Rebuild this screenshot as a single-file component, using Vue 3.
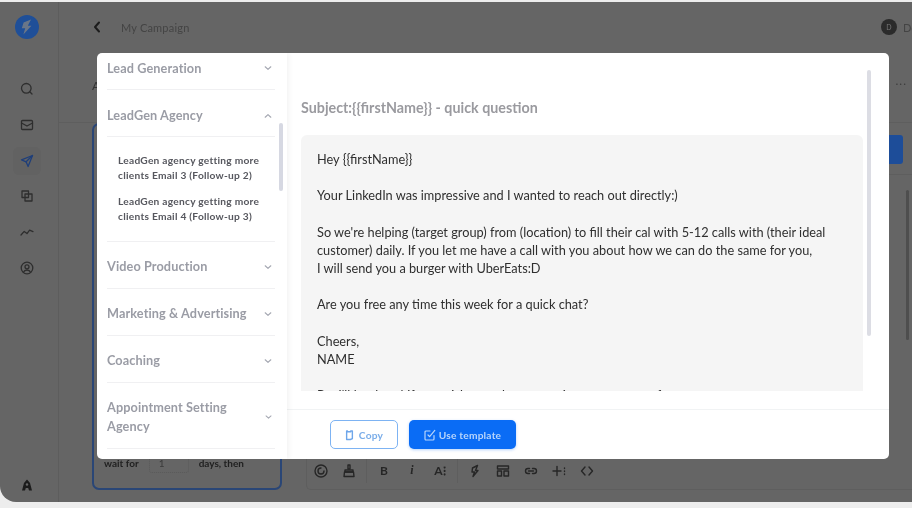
<template>
  <div class="screen">
    <div class="frame">
      <aside class="sidebar">
        <div class="logo">
          <svg width="24" height="24" viewBox="0 0 24 24"><circle cx="12" cy="12" r="12" fill="#1f4f98" /><path d="M16 4.5 8.6 7.6 6.8 13.2h3.4l-1.8 6.3 8-8.7h-3.6z" fill="#6a7688" /></svg>
        </div>
        <nav class="side-nav">
          <span v-for="icon in sideIcons" :key="icon.name" :class="['side-item', { active: icon.active }]">
            <svg width="14" height="14" viewBox="0 0 14 14" fill="none" :stroke="icon.active ? '#1f3f7a' : '#2e2e2e'" stroke-width="1.3" stroke-linecap="round" stroke-linejoin="round">
              <path v-for="d in icon.paths" :key="d" :d="d" />
            </svg>
          </span>
        </nav>
        <span class="side-bottom">
          <svg width="12" height="12" viewBox="0 0 12 12"><path d="M6 .5 9 4l2 7.5H8L7.2 9H4.8L4 11.5H1L3 4z" fill="#1c1c1c" /><circle cx="6" cy="5.5" r="1.2" fill="#666" /></svg>
        </span>
      </aside>

      <main class="main">
        <header class="topbar">
          <svg class="back" width="10" height="12" viewBox="0 0 10 12" fill="none" stroke="#1c1c1c" stroke-width="2" stroke-linecap="round" stroke-linejoin="round"><path d="M7 1.5 3 6l4 4.5" /></svg>
          <span class="camp-name">My Campaign</span>
          <span class="avatar">D</span>
          <span class="user-name">Do</span>
        </header>
        <div class="sub-row">
          <span class="sub-title">A</span>
          <span class="dots">...</span>
        </div>
        <div class="content">
          <section class="step-card">
            <div class="wait-row">
              <span>wait for</span>
              <span class="wait-input">1</span>
              <span>days, then</span>
            </div>
          </section>
          <section class="editor">
            <div class="editor-top"><span class="send-btn"></span></div>
            <div class="editor-body"><span class="bg-scroll"></span></div>
            <div class="toolbar">
              <template v-for="tool in tools" :key="tool.name">
                <span v-if="tool.sep" class="tool-sep"></span>
                <span v-else-if="tool.text" :class="['tool', tool.name]">{{ tool.text }}</span>
                <svg v-else class="tool" width="14" height="14" viewBox="0 0 14 14" fill="none" stroke="#262626" stroke-width="1.4" stroke-linecap="round" stroke-linejoin="round">
                  <path v-for="d in tool.paths" :key="d" :d="d" />
                </svg>
              </template>
            </div>
          </section>
        </div>
      </main>
    </div>

    <div class="modal">
      <div class="categories">
        <div v-for="cat in categories" :key="cat.name" :class="['cat', cat.kind]">
          <div class="cat-head">
            <span class="cat-name">{{ cat.name }}</span>
            <svg width="8" height="6" viewBox="0 0 8 6" fill="none" stroke="#a5a8b2" stroke-width="1.2" stroke-linecap="round" stroke-linejoin="round">
              <path :d="cat.items ? 'M1.2 4.2 4 1.6l2.8 2.6' : 'M1.2 1.8 4 4.4l2.8-2.6'" />
            </svg>
          </div>
          <div v-if="cat.items" class="cat-items">
            <p v-for="item in cat.items" :key="item">{{ item }}</p>
          </div>
        </div>
        <span class="list-scroll"></span>
      </div>
      <div class="detail">
        <div class="preview">
          <h2 class="subject">Subject:&#123;&#123;firstName&#125;&#125; - quick question</h2>
          <div class="mail">
            <p v-for="para in paragraphs" :key="para">{{ para }}</p>
          </div>
          <span class="preview-scroll"></span>
        </div>
        <footer class="modal-foot">
          <button class="btn btn-outline">
            <svg width="9" height="12" viewBox="0 0 11 13" fill="none" stroke="#6ea6ea" stroke-width="1.7" stroke-linejoin="round"><path d="M2 1.5h1v1h4v-1h2v9.5L6.5 12H2z" /></svg>
            Copy
          </button>
          <button class="btn btn-solid">
            <svg width="12" height="12" viewBox="0 0 12 12" fill="none" stroke="#b8d5fb" stroke-width="1.2" stroke-linecap="round" stroke-linejoin="round"><path d="M10 6.5V10a1 1 0 0 1-1 1H2a1 1 0 0 1-1-1V3a1 1 0 0 1 1-1h4" /><path d="m4 6 1.6 1.6L10.8 1.4" /></svg>
            Use template
          </button>
        </footer>
      </div>
    </div>
  </div>
</template>

<script setup>
const sideIcons = [
  { name: 'search', paths: ['M6.3 1.5a4.8 4.8 0 1 0 0 9.6 4.8 4.8 0 0 0 0-9.6z', 'M10 10l2 2'] },
  { name: 'mail', paths: ['M2.5 2.5h9a1 1 0 0 1 1 1v7a1 1 0 0 1-1 1h-9a1 1 0 0 1-1-1v-7a1 1 0 0 1 1-1z', 'M1.5 5 7 8l5.5-3'] },
  { name: 'send', active: true, paths: ['M12.5 1.5 1.5 5.8l4.6 2 2 4.7z', 'M6.1 7.8 12.5 1.5'] },
  { name: 'copy', paths: ['M2 2h6.5v6.5H2z', 'M5 5h7v7H5z'] },
  { name: 'stats', paths: ['M1 10l3.2-3.6L7 8.6l2.6-3.4L13 6.6'] },
  { name: 'user', paths: ['M7 1.2a5.8 5.8 0 1 0 0 11.6A5.8 5.8 0 0 0 7 1.2z', 'M7 3.8a2 2 0 1 0 0 4 2 2 0 0 0 0-4z', 'M3.5 11.2C4.2 9.6 5.4 9 7 9s2.8.6 3.5 2.2'] }
]

const tools = [
  { name: 'emoji', paths: ['M7 1a6 6 0 1 0 0 12A6 6 0 0 0 7 1z', 'M7 4a3 3 0 1 0 3 3'] },
  { name: 'brush', paths: ['M6 1h2v4H6z', 'M3 6h8v2H3z', 'M2.5 8h9l.5 4.5H2z'] },
  { name: 'sep1', sep: true },
  { name: 'bold', text: 'B' },
  { name: 'italic', text: 'i' },
  { name: 'size', text: 'A⁝' },
  { name: 'sep2', sep: true },
  { name: 'bolt', paths: ['M9.5 1.5 4.5 4 4 8h2.5L5 12.5 10 6.5H7.5z'] },
  { name: 'layout', paths: ['M1.5 2h11v3h-11z', 'M1.5 7h4v5h-4z', 'M8 7h4.5v5H8z'] },
  { name: 'link', paths: ['M5.5 4.5H4a2.5 2.5 0 0 0 0 5h1.5', 'M8.5 4.5H10a2.5 2.5 0 0 1 0 5H8.5', 'M4.5 7h5'] },
  { name: 'plus', paths: ['M5 2.5v9', 'M1 7h8', 'M12.5 4v.5', 'M12.5 7v.5', 'M12.5 10v.5'] },
  { name: 'code', paths: ['M5 3 1.5 7 5 11', 'M9 3l3.5 4L9 11'] }
]

const categories = [
  { name: 'Lead Generation', kind: 'cut' },
  {
    name: 'LeadGen Agency',
    kind: 'open',
    items: [
      'LeadGen agency getting more clients Email 3 (Follow-up 2)',
      'LeadGen agency getting more clients Email 4 (Follow-up 3)'
    ]
  },
  { name: 'Video Production' },
  { name: 'Marketing & Advertising' },
  { name: 'Coaching' },
  { name: 'Appointment Setting Agency', kind: 'tall' }
]

const paragraphs = [
  'Hey {{firstName}}',
  'Your LinkedIn was impressive and I wanted to reach out directly:)',
  "So we're helping (target group) from (location) to fill their cal with 5-12 calls with (their ideal customer) daily. If you let me have a call with you about how we can do the same for you,\nI will send you a burger with UberEats:D",
  'Are you free any time this week for a quick chat?',
  'Cheers,\nNAME',
  "P.s. I'll be there! If you wish to make an appointment, you are free"
]
</script>

<style>
html, body { margin: 0; background: #ededed; }
</style>

<style scoped>
.screen {
  position: relative;
  width: 912px;
  height: 508px;
  overflow: hidden;
  padding-top: 2px;
  box-sizing: border-box;
  background: #ededed;
  font-family: Lato, "Open Sans", sans-serif;
  filter: blur(0.35px);
}
.frame {
  display: flex;
  height: 500px;
  background: #656565;
  border-bottom-left-radius: 16px;
  overflow: hidden;
  color: #222;
}

.sidebar {
  width: 59px;
  flex-shrink: 0;
  box-sizing: border-box;
  border-right: 1px solid #5d5d5d;
  display: flex;
  flex-direction: column;
  align-items: center;
  padding-top: 13px;
}
.logo { height: 24px; margin-right: 4px; }
.side-nav {
  margin-top: 36px;
  margin-right: 4px;
  display: flex;
  flex-direction: column;
  align-items: center;
  gap: 7.8px;
}
.side-item {
  width: 28px;
  height: 28px;
  display: flex;
  align-items: center;
  justify-content: center;
  border-radius: 6px;
}
.side-item.active { background: #626262; }
.side-bottom { margin-top: auto; margin-right: 4px; margin-bottom: 15px; height: 12px; }

.main { flex: 1; min-width: 0; display: flex; flex-direction: column; }
.topbar {
  height: 50px;
  flex-shrink: 0;
  display: flex;
  align-items: center;
  padding-left: 33px;
}
.back { margin-right: 19px; }
.camp-name { font-size: 11px; color: #444; letter-spacing: 0.2px; }
.avatar {
  margin-left: auto;
  width: 16px;
  height: 16px;
  flex-shrink: 0;
  border-radius: 50%;
  background: #2b2b2b;
  color: #777;
  font-size: 7px;
  display: flex;
  align-items: center;
  justify-content: center;
}
.user-name { font-size: 11px; color: #444; margin-left: 6px; width: 9px; white-space: nowrap; flex-shrink: 0; }
.sub-row {
  height: 71px;
  flex-shrink: 0;
  display: flex;
  justify-content: space-between;
  padding: 26px 5px 0 33px;
  box-sizing: border-box;
  font-size: 12px;
  color: #333;
  border-bottom: 1px solid #5e5e5e;
}
.dots { color: #3c3c3c; letter-spacing: 1px; line-height: 6px; }
.content { flex: 1; min-height: 0; display: flex; gap: 24px; padding: 0 0 12px 33px; }
.step-card {
  width: 190px;
  flex-shrink: 0;
  box-sizing: border-box;
  border: 2px solid #2a4676;
  border-radius: 7px;
  display: flex;
  align-items: flex-end;
  padding: 0 10px 15px;
}
.wait-row { display: flex; align-items: center; gap: 10px; font-size: 10px; font-weight: 700; color: #1f1f1f; }
.wait-input {
  width: 40px;
  height: 20px;
  box-sizing: border-box;
  border: 1px dotted #5a5a5a;
  border-radius: 3px;
  display: flex;
  align-items: center;
  padding-left: 9px;
  font-weight: 400;
  color: #3a3a3a;
}
.editor { flex: 1; min-width: 0; display: flex; flex-direction: column; }
.editor-top {
  height: 52px;
  flex-shrink: 0;
  box-sizing: border-box;
  display: flex;
  justify-content: flex-end;
  padding: 12px 9px 11px 0;
  border-bottom: 1px solid #5e5e5e;
}
.send-btn { width: 14px; height: 29px; background: #1d4d99; border-radius: 0 3px 3px 0; }
.editor-body { flex: 1; min-height: 0; display: flex; justify-content: flex-end; padding: 15px 3px 0 0; }
.bg-scroll { width: 3px; height: 150px; background: #4e4e4e; border-radius: 2px; }
.toolbar {
  height: 38px;
  flex-shrink: 0;
  box-sizing: border-box;
  border: 1px solid #5e5e5e;
  border-width: 0 0 1px 1px;
  border-bottom-left-radius: 5px;
  display: flex;
  align-items: center;
  gap: 14px;
  padding-left: 7px;
  font-size: 12px;
  font-weight: 700;
  color: #262626;
}
.tool { width: 14px; text-align: center; flex-shrink: 0; white-space: nowrap; }
.tool.italic { font-style: italic; font-family: "Liberation Serif", serif; }
.tool-sep { width: 1px; height: 24px; background: #5e5e5e; margin: 0 -4px; }

.modal {
  position: absolute;
  left: 97px;
  top: 53px;
  width: 792px;
  height: 406px;
  background: #fff;
  border-radius: 5px;
  overflow: hidden;
  display: flex;
}
.categories {
  position: relative;
  width: 190px;
  flex-shrink: 0;
  box-sizing: border-box;
  padding: 0 12px 0 10px;
  overflow: hidden;
  box-shadow: 2px 0 5px rgba(0, 0, 0, 0.05);
}
.cat { border-bottom: 1px solid #f0f0f2; }
.cat-head {
  display: flex;
  align-items: center;
  justify-content: space-between;
  gap: 12px;
  min-height: 46px;
  padding: 3px 3px 0 0;
  box-sizing: border-box;
}
.cat.cut .cat-head { min-height: 36px; padding-top: 0; padding-bottom: 6px; }
.cat.open .cat-head { padding-top: 5px; }
.cat.tall .cat-head { min-height: 65px; }
.cat-name {
  font-size: 12.7px;
  line-height: 19px;
  font-weight: 700;
  color: #9a9ca5;
  letter-spacing: 0.1px;
}
.cat-items { padding: 16px 0 6px 11px; border-top: 1px solid #f0f0f2; }
.cat-items p {
  margin: 0 0 11px;
  font-size: 10.2px;
  line-height: 15px;
  font-weight: 700;
  letter-spacing: 0.25px;
  color: #56575e;
}
.list-scroll {
  position: absolute;
  left: 182px;
  top: 70px;
  width: 4px;
  height: 68px;
  border-radius: 2px;
  background: #d6d8e2;
}
.detail { flex: 1; min-width: 0; display: flex; flex-direction: column; }
.preview {
  position: relative;
  flex: 1;
  min-height: 0;
  display: flex;
  flex-direction: column;
  padding: 0 26px 18px 14px;
}
.subject {
  margin: 46px 0 18px;
  font-size: 14.3px;
  line-height: 18px;
  font-weight: 700;
  color: #9a9a9f;
}
.mail {
  flex: 1;
  min-height: 0;
  overflow: hidden;
  background: #f5f5f5;
  border-radius: 6px 6px 0 0;
  padding: 15px 35px 0 16px;
  font-size: 12.75px;
  line-height: 18px;
  color: #2f2f2f;
}
.mail p { margin: 0 0 18.4px; white-space: pre-line; }
.preview-scroll {
  position: absolute;
  left: 580px;
  top: 17px;
  width: 4px;
  height: 266px;
  border-radius: 2px;
  background: #dcdde4;
}
.modal-foot {
  height: 50px;
  flex-shrink: 0;
  box-sizing: border-box;
  border-top: 1px solid #f1f3f4;
  display: flex;
  align-items: center;
  gap: 11px;
  padding-left: 43px;
}
.btn {
  height: 29px;
  box-sizing: border-box;
  border-radius: 5px;
  display: flex;
  align-items: center;
  justify-content: center;
  gap: 5px;
  font-family: inherit;
  font-size: 10.2px;
  font-weight: 700;
  letter-spacing: 0.2px;
  padding: 0;
}
.btn-outline { width: 68px; background: #fff; border: 1px solid #7db3f3; color: #7aade9; }
.btn-solid {
  width: 107px;
  gap: 3px;
  background: #0a6cf5;
  border: 0;
  color: #b8d5fb;
  box-shadow: 0 1px 3px rgba(10, 108, 245, 0.3);
}
</style>
